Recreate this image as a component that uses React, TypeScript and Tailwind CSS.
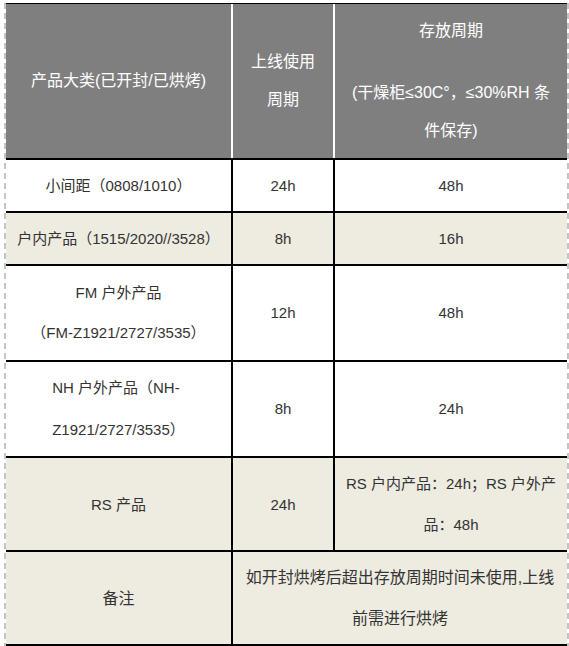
import React from 'react';

const font = { fontFamily: '"Liberation Sans", "Noto Sans CJK SC", sans-serif' };

const cell = 'flex items-center justify-center text-center';

export default function App() {
  return (
    <div className="w-[569px] h-[646px] bg-white" style={font}>
      <div className="ml-1 w-[565px] h-full border-x-2 border-dashed border-[#c4c4c4]">
        <div className="mt-[3px] border-t border-black text-[15px] text-[#333333]">
          {/* Header */}
          <div className="grid grid-cols-[227px_102px_1fr] h-[156px] bg-[#7f7f7f] border-b-2 border-black text-white text-[16px] leading-[38px]">
            <div className={`${cell} border-r-2 border-white`}>产品大类(已开封/已烘烤)</div>
            <div className={`${cell} border-r-2 border-white flex-col`}>
              <span>上线使用</span>
              <span>周期</span>
            </div>
            <div className={`${cell} flex-col px-2`}>
              <span className="mb-6">存放周期</span>
              <span>(干燥柜≤30C°，≤30%RH 条</span>
              <span>件保存)</span>
            </div>
          </div>

          {/* Row 1 */}
          <div className="grid grid-cols-[227px_102px_1fr] h-[53px] border-b-2 border-black leading-[41px]">
            <div className={`${cell} border-r-2 border-black`}>小间距（0808/1010）</div>
            <div className={`${cell} border-r-2 border-black`}>24h</div>
            <div className={cell}>48h</div>
          </div>

          {/* Row 2 */}
          <div className="grid grid-cols-[227px_102px_1fr] h-[53px] bg-[#eeebe1] border-b-2 border-black leading-[41px]">
            <div className={`${cell} border-r-2 border-black`}>户内产品（1515/2020//3528）</div>
            <div className={`${cell} border-r-2 border-black`}>8h</div>
            <div className={cell}>16h</div>
          </div>

          {/* Row 3 */}
          <div className="grid grid-cols-[227px_102px_1fr] h-[96px] border-b-2 border-black leading-[40px]">
            <div className={`${cell} border-r-2 border-black flex-col`}>
              <span>FM 户外产品</span>
              <span>（FM-Z1921/2727/3535）</span>
            </div>
            <div className={`${cell} border-r-2 border-black`}>12h</div>
            <div className={cell}>48h</div>
          </div>

          {/* Row 4 */}
          <div className="grid grid-cols-[227px_102px_1fr] h-[96px] border-b-2 border-black leading-[42px]">
            <div className={`${cell} border-r-2 border-black`}>
              <div className="text-left">
                <div>NH 户外产品（NH-</div>
                <div>Z1921/2727/3535）</div>
              </div>
            </div>
            <div className={`${cell} border-r-2 border-black`}>8h</div>
            <div className={cell}>24h</div>
          </div>

          {/* Row 5 */}
          <div className="grid grid-cols-[227px_102px_1fr] h-[94px] bg-[#eeebe1] border-b-2 border-black leading-[41px]">
            <div className={`${cell} border-r-2 border-black`}>RS 产品</div>
            <div className={`${cell} border-r-2 border-black`}>24h</div>
            <div className={`${cell} flex-col`}>
              <span>RS 户内产品：24h；RS 户外产</span>
              <span>品：48h</span>
            </div>
          </div>

          {/* Row 6 */}
          <div className="grid grid-cols-[227px_1fr] h-[94px] bg-[#eeebe1] border-b-2 border-black leading-[41px] text-[16px]">
            <div className={`${cell} border-r-2 border-black`}>备注</div>
            <div className={`${cell} flex-col`}>
              <span>如开封烘烤后超出存放周期时间未使用,上线</span>
              <span>前需进行烘烤</span>
            </div>
          </div>
        </div>
      </div>
    </div>
  );
}
